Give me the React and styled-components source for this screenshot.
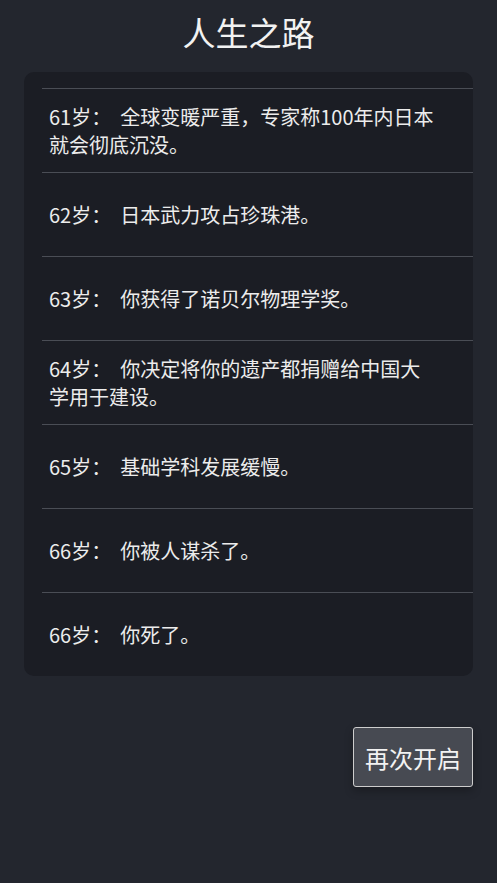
import styled, { createGlobalStyle } from "styled-components";

const GlobalStyle = createGlobalStyle`
  html, body {
    margin: 0;
    padding: 0;
    background-color: #23262e;
  }
  body {
    font-family: "Noto Sans CJK SC", "Noto Sans", sans-serif;
    color: #ececec;
  }
`;

const events = [
  { age: 61, text: "全球变暖严重，专家称100年内日本就会彻底沉没。" },
  { age: 62, text: "日本武力攻占珍珠港。" },
  { age: 63, text: "你获得了诺贝尔物理学奖。" },
  { age: 64, text: "你决定将你的遗产都捐赠给中国大学用于建设。" },
  { age: 65, text: "基础学科发展缓慢。" },
  { age: 66, text: "你被人谋杀了。" },
  { age: 66, text: "你死了。" },
];

const Page = styled.div`
  min-height: 883px;
  background-color: #23262e;
  display: flex;
  flex-direction: column;
  padding: 0 24px;
  box-sizing: border-box;
`;

const Title = styled.h1`
  margin: 0;
  height: 64px;
  line-height: 64px;
  text-align: center;
  font-size: 33px;
  font-weight: 400;
  color: #f2f2f2;
`;

const Card = styled.div`
  margin-top: 8px;
  background-color: #1b1d24;
  border-radius: 10px;
  padding: 16px 0 0 18px;
  overflow: hidden;
`;

const Row = styled.div`
  height: 84px;
  box-sizing: border-box;
  border-top: 1px solid #4a4d55;
  display: flex;
  align-items: center;
  padding: 0 36px 0 7px;
`;

const RowText = styled.p`
  margin: 0;
  font-size: 20px;
  line-height: 28px;
  color: #ececec;
`;

const Age = styled.span`
  margin-right: 9px;
`;

const Footer = styled.div`
  display: flex;
  justify-content: flex-end;
  padding-top: 51px;
`;

const RestartButton = styled.button`
  width: 120px;
  height: 60px;
  background-color: #474a52;
  color: #f2f2f2;
  border: 1px solid #cdcdcd;
  border-radius: 3px;
  font-family: "Noto Sans CJK SC", "Noto Sans", sans-serif;
  font-size: 24px;
  box-shadow: 0 4px 8px rgba(0, 0, 0, 0.25);
  cursor: pointer;
`;

const App = () => {
  return (
    <Page>
      <GlobalStyle />
      <Title>人生之路</Title>
      <Card>
        {events.map((e, i) => (
          <Row key={i}>
            <RowText>
              <Age>{e.age}岁：</Age>
              {e.text}
            </RowText>
          </Row>
        ))}
      </Card>
      <Footer>
        <RestartButton>再次开启</RestartButton>
      </Footer>
    </Page>
  );
};

export default App;
